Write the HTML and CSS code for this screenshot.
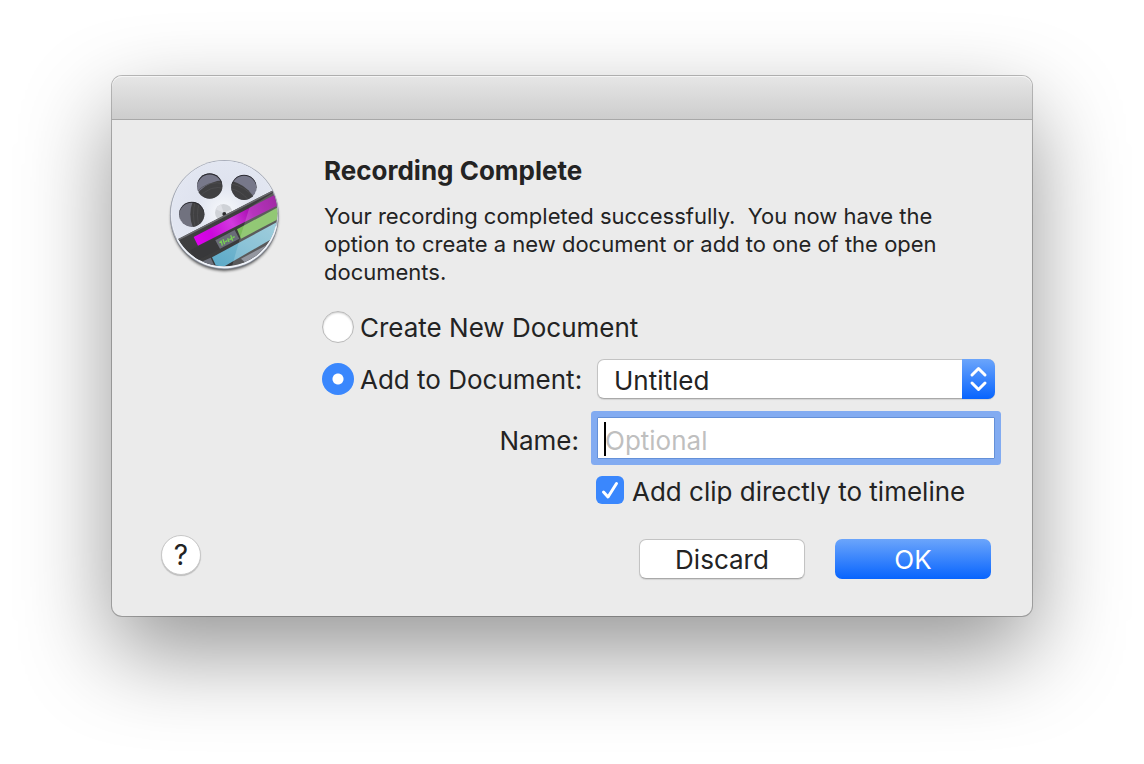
FILE: index.html
```html
<!DOCTYPE html>
<html lang="en">
<head>
  <meta charset="UTF-8" />
  <meta name="viewport" content="width=device-width, initial-scale=1.0"/>
  <title>Recording Complete</title>
  <link rel="stylesheet" href="styles.css">
</head>
<body>

  <div class="dialog" role="dialog" aria-labelledby="dialog-title">
    <div class="titlebar"></div>

    <form class="content">
      <div class="top">
        <!-- film reel icon -->
        <svg class="app-icon" viewBox="0 0 390 390" aria-hidden="true">
          <defs>
            <radialGradient id="reel" cx="0.5" cy="0.48" r="0.55">
              <stop offset="0" stop-color="#f8fafc"/>
              <stop offset="0.5" stop-color="#dfe3ef"/>
              <stop offset="1" stop-color="#e3e7f2"/>
            </radialGradient>
            <linearGradient id="pink" gradientUnits="userSpaceOnUse" x1="100" y1="270" x2="345" y2="140">
              <stop offset="0" stop-color="#e000f0"/>
              <stop offset="0.2" stop-color="#cc08dc"/>
              <stop offset="0.45" stop-color="#d23ade"/>
              <stop offset="0.7" stop-color="#a80cb0"/>
              <stop offset="1" stop-color="#8e0092"/>
            </linearGradient>
            <linearGradient id="blue" x1="0" y1="1" x2="1" y2="0">
              <stop offset="0" stop-color="#5ba9c8"/>
              <stop offset="1" stop-color="#90c6d6"/>
            </linearGradient>
            <linearGradient id="dark" x1="0" y1="0" x2="1" y2="1">
              <stop offset="0" stop-color="#454545"/>
              <stop offset="1" stop-color="#333335"/>
            </linearGradient>
            <clipPath id="disc"><circle cx="190" cy="187" r="159"/></clipPath>
            <clipPath id="hole1"><circle cx="146" cy="105" r="38"/></clipPath>
            <clipPath id="hole2"><circle cx="249" cy="109" r="38"/></clipPath>
            <clipPath id="hole3"><circle cx="92" cy="190" r="38"/></clipPath>
            <filter id="soft" x="-10%" y="-10%" width="120%" height="125%"><feGaussianBlur stdDeviation="5"/></filter>
          </defs>
          <circle cx="190" cy="199" r="160" fill="#000" opacity="0.7" filter="url(#soft)"/>
          <circle cx="190" cy="193" r="163" fill="#777b83"/>
          <circle cx="190" cy="190" r="163" fill="#a9aebb"/>
          <circle cx="190" cy="190" r="160" fill="#f7f9fc"/>
          <circle cx="190" cy="189" r="159" fill="url(#reel)"/>

          <g clip-path="url(#hole1)">
            <circle cx="146" cy="105" r="38" fill="#77788a"/>
            <circle cx="190" cy="190" r="102" fill="#404042"/>
            <path d="M100 130Q140 82 195 100M108 145Q150 95 195 115" fill="none" stroke="#525254" stroke-width="2"/>
            <circle cx="146" cy="108" r="40" fill="none" stroke="#2b2b31" stroke-width="5"/>
          </g>
          <g clip-path="url(#hole2)">
            <circle cx="249" cy="109" r="38" fill="#77788a"/>
            <circle cx="190" cy="190" r="102" fill="#404042"/>
            <path d="M205 98Q255 105 280 142M205 112Q240 118 263 148" fill="none" stroke="#525254" stroke-width="2"/>
            <circle cx="249" cy="112" r="40" fill="none" stroke="#2b2b31" stroke-width="5"/>
          </g>
          <g clip-path="url(#hole3)">
            <circle cx="92" cy="190" r="38" fill="#71727f"/>
            <circle cx="190" cy="190" r="102" fill="#404042"/>
            <path d="M103 150Q92 190 103 230M115 155Q104 190 115 230" fill="none" stroke="#525254" stroke-width="2"/>
            <circle cx="92" cy="193" r="40" fill="none" stroke="#2b2b31" stroke-width="5"/>
          </g>

          <circle cx="188" cy="185" r="26" fill="#cfd2d7"/>
          <path d="M188 185L164 175A26 26 0 0 1 180 160ZM188 185L212 195A26 26 0 0 0 212 175Z" fill="#dfe1e6"/>
          <circle cx="190" cy="189" r="6" fill="#2e2e30"/>

          <!-- timeline strips across the lower half -->
          <g clip-path="url(#disc)">
            <path d="M40 270L338 117L370 150V370H40Z" fill="url(#dark)"/>
            <path d="M40 270L338 117L340 121L42 274Z" fill="#6b6b6f"/>
            <path d="M88 298L160 262L176 293L106 330Z" fill="#38383a"/>
            <path d="M98 258L342 131L356 160L111 284Z" fill="url(#pink)"/>
            <path d="M228 235L352 168L360 200L240 263Z" fill="#7cbd5a"/>
            <path d="M163 268L221 237L235 263L177 293Z" fill="#6a6d78"/>
            <path d="M175 275L182 271M180 268L184 284M186 265L191 280M192 273L199 269M200 262L204 273M205 266L213 262M209 253L215 269M215 260L221 257" stroke="#79d354" stroke-width="4" fill="none"/>
            <path d="M153 319L356 209L356 250L188 347L165 344Z" fill="url(#blue)"/>
            <path d="M118 334L149 320L163 350H130Z" fill="#6d707b"/>
            <path d="M240 323L356 262V290L270 350Z" fill="#7d818c"/>
            <path d="M265 170L345 120L370 150V290L270 360H209L236 265Z" fill="#fff" opacity="0.17"/>
          </g>
          <path d="M49 265A160 160 0 0 0 346 225" fill="none" stroke="#f0f4f9" stroke-width="4"/>
        </svg>

        <div class="main">
          <h1 id="dialog-title">Recording Complete</h1>
          <p class="message">Your recording completed successfully.&nbsp; You now have the option to create a new document or add to one of the open documents.</p>

          <div class="fields">
            <label class="choice wide">
              <input type="radio" name="target" value="new">
              <span>Create New Document</span>
            </label>

            <label class="choice">
              <input type="radio" name="target" value="add" checked>
              <span>Add to Document:</span>
            </label>
            <div class="popup">
              <select aria-label="Document">
                <option>Untitled</option>
              </select>
              <svg class="arrows" viewBox="0 0 33 40" aria-hidden="true">
                <path d="M10 16L16.500 9.500L23 16M10 24L16.500 30.500L23 24"/>
              </svg>
            </div>

            <label class="name-label" for="clip-name">Name:</label>
            <div class="name-field">
              <input type="text" id="clip-name" placeholder="Optional">
              <span class="caret"></span>
            </div>

            <label class="check">
              <input type="checkbox" checked>
              <span>Add clip directly to timeline</span>
            </label>
          </div>
        </div>
      </div>

      <div class="footer">
        <button type="button" class="help" aria-label="Help">?</button>
        <div class="buttons">
          <button type="button" class="btn discard">Discard</button>
          <button type="submit" class="btn ok">OK</button>
        </div>
      </div>
    </form>
  </div>

</body>
</html>
```
FILE: styles.css
```css
* {
  box-sizing: border-box;
  margin: 0;
  padding: 0;
  font-family: Inter, 'Liberation Sans', sans-serif;
}

body {
  min-height: 100vh;
  background: white;
  color: #232323;
  padding: 76px 112px;
}

.dialog {
  max-width: 1000px;
  margin: 0 auto;
  background: #ebebeb;
  border-radius: 10px;
  box-shadow: 0 0 0 1px rgba(0, 0, 0, 0.25), 0 36px 90px rgba(0, 0, 0, 0.42);
}

.titlebar {
  height: 44px;
  background: linear-gradient(to bottom, #e6e6e6, #cdcdcd);
  border-bottom: 1px solid #a8a8a8;
  border-radius: 10px 10px 0 0;
  box-shadow: inset 0 1px 0 #f5f5f5;
}

.content {
  padding: 35px 37px 37px 49px;
}

.top {
  display: flex;
  align-items: flex-start;
}

.app-icon {
  width: 130px;
  height: 130px;
  margin-top: -4px;
  flex: none;
}

.main {
  flex: 1;
  margin-left: 31px;
}

h1 {
  font-size: 26px;
  line-height: 32px;
  font-weight: bold;
  padding-left: 2px;
}

.message {
  margin-top: 15px;
  padding-left: 2px;
  font-size: 22px;
  line-height: 28px;
}

.fields {
  display: grid;
  grid-template-columns: 257px 1fr;
  gap: 18px;
  align-items: center;
  margin-top: 23px;
  font-size: 26px;
  line-height: 32px;
}

.choice {
  display: flex;
  align-items: center;
  gap: 6px;
  white-space: nowrap;
}

.choice span {
  padding-top: 2px;
}

.choice input {
  appearance: none;
  width: 32px;
  height: 32px;
  flex: none;
  border-radius: 50%;
  background: white;
  border: 1px solid #b9b9b9;
  box-shadow: inset 0 1px 2px rgba(0, 0, 0, 0.2);
}

.choice input:checked {
  border: none;
  background: radial-gradient(circle, white 5px, #3a87fd 6px);
  box-shadow: none;
}

.wide {
  grid-column: 1 / 3;
  height: 32px;
  padding-top: 3px;
}

.popup,
.name-field {
  position: relative;
}

.popup select {
  display: block;
  appearance: none;
  width: 100%;
  height: 40px;
  padding: 3px 40px 0 16px;
  border: 1px solid #c3c3c3;
  border-bottom-color: #a9a9a9;
  border-radius: 7px;
  background: white;
  box-shadow: 0 1px 1px rgba(0, 0, 0, 0.1);
  color: #232323;
  font-size: 26px;
}

.arrows {
  position: absolute;
  top: 0;
  right: 0;
  width: 33px;
  height: 40px;
  border-radius: 0 7px 7px 0;
  background: linear-gradient(to bottom, #6ba5fb, #0764fe);
  pointer-events: none;
}

.arrows path {
  fill: none;
  stroke: white;
  stroke-width: 3;
  stroke-linecap: round;
  stroke-linejoin: round;
}

.name-label {
  padding-top: 5px;
  text-align: right;
}

.name-field input {
  display: block;
  width: 100%;
  height: 42px;
  padding: 5px 7px 0;
  border: 1px solid #6490d8;
  outline: none;
  background: white;
  box-shadow: 0 0 0 6px #82abf1;
  border-radius: 1px;
  font-size: 26px;
  caret-color: transparent;
}

.name-field input::placeholder {
  color: #bfbfbf;
}

.caret {
  position: absolute;
  left: 7px;
  top: 5px;
  width: 2px;
  height: 34px;
  background: black;
}

.check {
  grid-column: 2;
  display: flex;
  gap: 8px;
  height: 28px;
  margin: -1px 0 0 -1px;
  overflow: hidden;
  white-space: nowrap;
}

.check input {
  appearance: none;
  width: 28px;
  height: 28px;
  flex: none;
  border-radius: 6px;
  background: #3a87fd url("data:image/svg+xml,%3Csvg xmlns='http://www.w3.org/2000/svg' viewBox='0 0 28 28'%3E%3Cpath d='M7.500 16L12 21L20.500 7.500' fill='none' stroke='white' stroke-width='3' stroke-linecap='round' stroke-linejoin='round'/%3E%3C/svg%3E");
}

.footer {
  display: flex;
  justify-content: space-between;
  margin-top: 31px;
}

.help {
  width: 40px;
  height: 40px;
  border: 1px solid #c8c8c8;
  border-radius: 50%;
  background: white;
  box-shadow: 0 1px 1px rgba(0, 0, 0, 0.2);
  color: #232323;
  font-size: 28px;
}

.buttons {
  display: flex;
  gap: 30px;
  padding: 4px 4px 0 0;
}

.btn {
  height: 40px;
  border-radius: 7px;
  font-size: 26px;
}

.discard {
  width: 166px;
  border: 1px solid #c3c3c3;
  border-bottom-color: #a9a9a9;
  background: white;
  box-shadow: 0 1px 1px rgba(0, 0, 0, 0.1);
  color: #232323;
}

.ok {
  width: 156px;
  border: none;
  background: linear-gradient(to bottom, #6ba5fb, #0764fe);
  color: white;
}
```
